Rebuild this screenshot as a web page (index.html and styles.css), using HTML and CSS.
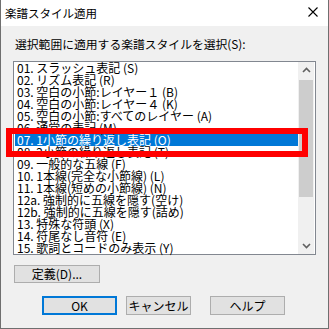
FILE: index.html
```html
<!DOCTYPE html>
<html lang="ja">
<head>
    <meta charset="UTF-8">
    <title>楽譜スタイル適用</title>
    <link rel="stylesheet" href="styles.css">
</head>
<body>
    <div class="window">
        <div class="titlebar">
            <span class="title">楽譜スタイル適用</span>
            <svg class="close" width="10" height="10" viewBox="0 0 10 10">
                <path d="M0.5 0.5 L9.5 9.5 M9.5 0.5 L0.5 9.5" stroke="#000" stroke-width="1.1" fill="none"/>
            </svg>
        </div>

        <div class="content">
            <div class="label">選択範囲に適用する楽譜スタイルを選択(S):</div>

            <!-- リストボックス -->
            <div class="listbox">
                <ul class="items">
                    <li>01. スラッシュ表記 (S)</li>
                    <li>02. リズム表記 (R)</li>
                    <li>03. 空白の小節:レイヤー１ (B)</li>
                    <li>04. 空白の小節:レイヤー４ (K)</li>
                    <li>05. 空白の小節:すべてのレイヤー (A)</li>
                    <li>06. 通常の表記 (M)</li>
                    <li class="selected">07. 1小節の繰り返し表記 (O)</li>
                    <li>08. 2小節の繰り返し表記 (T)</li>
                    <li>09. 一般的な五線 (F)</li>
                    <li>10. 1本線(完全な小節線) (L)</li>
                    <li>11. 1本線(短めの小節線) (N)</li>
                    <li>12a. 強制的に五線を隠す(空け)</li>
                    <li>12b. 強制的に五線を隠す(詰め)</li>
                    <li>13. 特殊な符頭 (X)</li>
                    <li>14. 符尾なし音符 (E)</li>
                    <li>15. 歌詞とコードのみ表示 (Y)</li>
                </ul>
                <div class="scrollbar">
                    <svg class="arrow" width="9" height="6" viewBox="0 0 9 6">
                        <path d="M1 5 L4.5 1.5 L8 5" stroke="#606060" stroke-width="1.6" fill="none"/>
                    </svg>
                    <div class="track">
                        <div class="thumb"></div>
                    </div>
                    <svg class="arrow" width="9" height="6" viewBox="0 0 9 6">
                        <path d="M1 1 L4.5 4.5 L8 1" stroke="#606060" stroke-width="1.6" fill="none"/>
                    </svg>
                </div>
            </div>

            <button class="btn btn-define">定義(D)...</button>

            <div class="actions">
                <button class="btn btn-ok">OK</button>
                <button class="btn btn-cancel">キャンセル</button>
                <button class="btn btn-help">ヘルプ</button>
            </div>
        </div>

        <!-- 注目枠 -->
        <div class="highlight"></div>
    </div>
</body>
</html>
```

FILE: styles.css
```css
body {
    margin: 0;
    font-family: "Noto Sans CJK JP", "Noto Sans", sans-serif;
    font-size: 12px;
    color: #000;
}

.window {
    position: relative;
    width: 327px;
    height: 328px;
    background-color: #f0f0f0;
    border: 1px solid #6f6f6f;
    border-top: none;
}

.titlebar {
    height: 26px;
    background-color: #fff;
    display: flex;
    align-items: center;
    justify-content: space-between;
    padding: 0 10px 0 4px;
}

.title {
    font-size: 11.5px;
    line-height: 14px;
    margin-top: -1px;
}

.close {
    display: block;
    margin-top: -2px;
}

.content {
    padding: 10px 0 0 12px;
}

.label {
    line-height: 16px;
    padding-left: 2px;
    font-size: 11.8px;
}

.listbox {
    display: flex;
    width: 301px;
    height: 192px;
    margin-top: 9px;
    background-color: #fff;
    border: 1px solid #828790;
}

.items {
    list-style: none;
    margin: 0;
    padding: 0 0 0 1px;
    flex: 1;
}

.items li {
    height: 12px;
    line-height: 12px;
    padding-left: 2px;
    font-size: 12px;
    white-space: nowrap;
}

.items li.selected {
    background-color: #0078d7;
    color: #fff;
}

.scrollbar {
    width: 16px;
    margin-right: 1px;
    background-color: #f0f0f0;
    display: flex;
    flex-direction: column;
    align-items: center;
}

.arrow {
    display: block;
    margin: 5px 0;
}

.track {
    flex: 1;
    width: 100%;
}

.thumb {
    height: 117px;
    margin: 2px 1px 0;
    background-color: #cdcdcd;
}

.btn {
    font-family: inherit;
    font-size: 12px;
    line-height: 14px;
    color: #000;
    background-color: #e1e1e1;
    border: 1px solid #adadad;
    padding: 0;
    display: block;
}

.btn-define {
    width: 86px;
    height: 18px;
    margin: 10px 0 0 1px;
}

.actions {
    display: flex;
    margin-top: 13px;
    padding-left: 29px;
}

.btn-ok {
    width: 75px;
    height: 19px;
    border: 2px solid #0078d7;
}

.btn-cancel {
    width: 65px;
    height: 19px;
    margin-left: 9px;
}

.btn-help {
    width: 75px;
    height: 19px;
    margin-left: 19px;
}

.highlight {
    position: absolute;
    left: 5px;
    top: 128px;
    width: 290px;
    height: 17px;
    border: 6px solid #ff0000;
}
```
